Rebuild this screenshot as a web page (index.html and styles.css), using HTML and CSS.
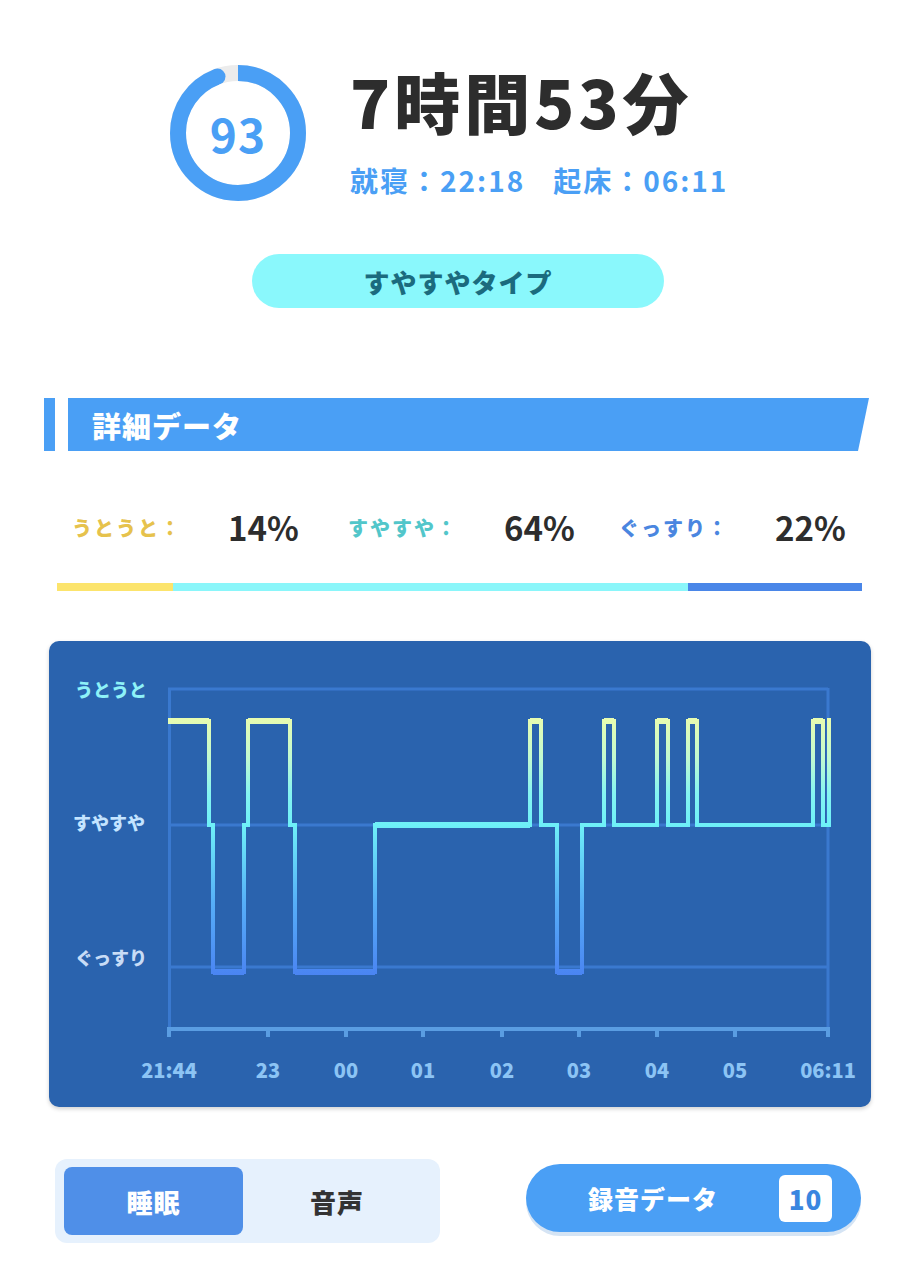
FILE: index.html
```html
<!DOCTYPE html>
<html lang="ja">
<head>
  <meta charset="UTF-8">
  <meta name="viewport" content="width=device-width, initial-scale=1.0">
  <title>睡眠データ</title>
  <link rel="stylesheet" href="styles.css">
</head>
<body>
  <div class="page">

    <!-- スコアと睡眠時間 -->
    <section class="summary">
      <div class="score">
        <svg class="score-ring" width="136" height="136" viewBox="0 0 136 136">
          <circle cx="68" cy="68" r="60" fill="none" stroke="#ececec" stroke-width="16"/>
          <circle cx="68" cy="68" r="60" fill="none" stroke="#4a9ff5" stroke-width="16"
                  stroke-dasharray="354.4 377" transform="rotate(-90 68 68)"/>
          <circle cx="47.5" cy="11.6" r="8" fill="#4a9ff5"/>
        </svg>
        <span class="score-value">93</span>
      </div>
      <div class="summary-text">
        <h1 class="duration">7時間53分</h1>
        <p class="times"><span>就寝：22:18</span><span>起床：06:11</span></p>
      </div>
    </section>

    <div class="type-pill">すやすやタイプ</div>

    <h2 class="section-title">
      <span class="title-mark"></span>
      <span class="title-bar">詳細データ</span>
    </h2>

    <div class="ratio">
      <div class="ratio-item light">
        <span class="ratio-label">うとうと：</span>
        <span class="ratio-value">14%</span>
      </div>
      <div class="ratio-item normal">
        <span class="ratio-label">すやすや：</span>
        <span class="ratio-value">64%</span>
      </div>
      <div class="ratio-item deep">
        <span class="ratio-label">ぐっすり：</span>
        <span class="ratio-value">22%</span>
      </div>
    </div>

    <div class="ratio-bar">
      <span class="bar-light" style="width:14.4%"></span>
      <span class="bar-normal" style="width:64%"></span>
      <span class="bar-deep" style="width:21.6%"></span>
    </div>

    <!-- 睡眠グラフ -->
    <div class="chart-card">
      <svg class="chart" width="822" height="466" viewBox="49 641 822 466">
        <defs>
          <linearGradient id="lineGrad" gradientUnits="userSpaceOnUse" x1="0" y1="716" x2="0" y2="976">
            <stop offset="0" stop-color="#eafcae"/>
            <stop offset="0.16" stop-color="#c2fad0"/>
            <stop offset="0.3" stop-color="#84f4f2"/>
            <stop offset="0.42" stop-color="#6ef0f8"/>
            <stop offset="0.72" stop-color="#56aef8"/>
            <stop offset="1" stop-color="#4a84f2"/>
          </linearGradient>
        </defs>

        <g class="grid">
          <line x1="168" y1="689" x2="828" y2="689"/>
          <line x1="168" y1="825" x2="828" y2="825"/>
          <line x1="168" y1="967" x2="828" y2="967"/>
          <line x1="169.5" y1="688" x2="169.5" y2="1029"/>
          <line x1="828" y1="688" x2="828" y2="1029"/>
        </g>

        <g class="axis">
          <line x1="167" y1="1029" x2="830" y2="1029"/>
          <line x1="169" y1="1029" x2="169" y2="1037"/>
          <line x1="268" y1="1029" x2="268" y2="1037"/>
          <line x1="346" y1="1029" x2="346" y2="1037"/>
          <line x1="423" y1="1029" x2="423" y2="1037"/>
          <line x1="502" y1="1029" x2="502" y2="1037"/>
          <line x1="579" y1="1029" x2="579" y2="1037"/>
          <line x1="657" y1="1029" x2="657" y2="1037"/>
          <line x1="735" y1="1029" x2="735" y2="1037"/>
          <line x1="828" y1="1029" x2="828" y2="1037"/>
        </g>

        <path class="sleep-line" d="M168 721 H209 V825 H213 V972 H244 V825 H248 V721 H290 V825 H295 V972 H375 V825 H530 V721 H541 V825 H557 V972 H582 V825 H604 V721 H614 V825 H657 V721 H668 V825 H688 V721 H697 V825 H813 V721 H823 V825 H829 V718"/>
        <path class="sleep-level" d="M168 721 H209 M248 721 H290 M530 721 H541 M604 721 H614 M657 721 H668 M688 721 H697 M813 721 H823 M213 972 H244 M295 972 H375 M557 972 H582 M375 825 H530"/>

        <text class="y-label y-light" x="75" y="697">うとうと</text>
        <text class="y-label y-normal" x="73" y="830">すやすや</text>
        <text class="y-label y-deep" x="75" y="965">ぐっすり</text>

        <g class="x-label">
          <text x="169" y="1078">21:44</text>
          <text x="268" y="1078">23</text>
          <text x="346" y="1078">00</text>
          <text x="423" y="1078">01</text>
          <text x="502" y="1078">02</text>
          <text x="579" y="1078">03</text>
          <text x="657" y="1078">04</text>
          <text x="735" y="1078">05</text>
          <text x="828" y="1078">06:11</text>
        </g>
      </svg>
    </div>

    <div class="actions">
      <div class="segment">
        <button class="seg-btn active">睡眠</button>
        <button class="seg-btn">音声</button>
      </div>
      <button class="record-btn">
        <span>録音データ</span>
        <span class="record-count">10</span>
      </button>
    </div>

  </div>
</body>
</html>
```

FILE: styles.css
```css
body {
  margin: 0;
  font-family: "Noto Sans CJK JP", "Noto Sans", sans-serif;
  background: #fff;
  color: #2d2d2d;
}
.page {
  width: 919px;
}

/* サマリー */
.summary {
  display: flex;
  gap: 44px;
  height: 136px;
  padding: 65px 0 0 170px;
}
.score {
  display: grid;
  width: 136px;
  height: 136px;
}
.score > * {
  grid-area: 1 / 1;
}
.score-value {
  place-self: center;
  font-size: 46px;
  font-weight: 700;
  color: #4a9ff5;
  letter-spacing: 1px;
}
.duration {
  margin: -1px 0 0;
  font-size: 66px;
  font-weight: 900;
  line-height: 1.1;
  letter-spacing: 4px;
  color: #2d2d2d;
}
.times {
  margin: 23px 0 0;
  font-size: 28px;
  font-weight: 700;
  color: #4a9ff5;
  letter-spacing: 2px;
}
.times span + span {
  margin-left: 28px;
}

.type-pill {
  display: flex;
  align-items: center;
  justify-content: center;
  width: 412px;
  height: 54px;
  margin: 53px 0 0 252px;
  border-radius: 27px;
  background: #8af8fc;
  color: #1b6b7e;
  font-size: 26px;
  font-weight: 900;
  letter-spacing: 1px;
}

/* 見出し */
.section-title {
  display: flex;
  gap: 13px;
  height: 53px;
  margin: 90px 0 0;
  padding-left: 44px;
}
.title-mark {
  width: 11px;
  background: #4a9ff5;
}
.title-bar {
  display: flex;
  align-items: center;
  width: 801px;
  padding-left: 24px;
  box-sizing: border-box;
  background: #4a9ff5;
  clip-path: polygon(0 0, 100% 0, calc(100% - 11px) 100%, 0 100%);
  color: #fff;
  font-size: 29px;
  font-weight: 900;
  letter-spacing: 1px;
}

/* 割合 */
.ratio {
  display: flex;
  align-items: center;
  height: 34px;
  margin: 59px 0 0 72px;
}
.ratio-item {
  display: flex;
  align-items: center;
  width: 271px;
}
.ratio-item.light {
  width: 276px;
}
.ratio-label {
  width: 156px;
  font-size: 20px;
  font-weight: 900;
  letter-spacing: 2px;
}
.light .ratio-label { color: #e6c24c; }
.normal .ratio-label { color: #52c6ca; }
.deep .ratio-label { color: #4a86e0; }
.ratio-value {
  font-size: 33px;
  font-weight: 700;
  color: #2d2d2d;
}

.ratio-bar {
  display: flex;
  width: 805px;
  height: 8px;
  margin: 39px 0 0 57px;
}
.bar-light { background: #fce46c; }
.bar-normal { background: #8af6fa; }
.bar-deep { background: #4a86e8; }

/* グラフ */
.chart-card {
  width: 822px;
  height: 466px;
  margin: 50px 0 0 49px;
  border-radius: 10px;
  background: #2a63ae;
  box-shadow: 0 2px 4px rgba(0, 0, 0, 0.18);
  overflow: hidden;
}
.chart {
  display: block;
}
.grid line {
  stroke: #3a79cf;
  stroke-width: 3;
}
.axis line {
  stroke: #5a9de2;
  stroke-width: 4;
}
.sleep-line {
  fill: none;
  stroke: url(#lineGrad);
  stroke-width: 4;
}
.sleep-level {
  fill: none;
  stroke: url(#lineGrad);
  stroke-width: 6;
}
.y-label {
  font-size: 18px;
  font-weight: 900;
}
.y-light { fill: #8ef2f8; }
.y-normal { fill: #c4e4ff; }
.y-deep { fill: #c8dcf6; }
.x-label text {
  fill: #8cc4f4;
  font-size: 20px;
  font-weight: 900;
  text-anchor: middle;
}

/* 下部ボタン */
.actions {
  display: flex;
  align-items: flex-start;
  margin-top: 52px;
  padding-left: 55px;
}
.segment {
  display: flex;
  width: 385px;
  height: 84px;
  padding: 8px 9px;
  box-sizing: border-box;
  border-radius: 12px;
  background: #e6f1fd;
}
.seg-btn {
  flex: 1;
  border: none;
  border-radius: 8px;
  background: transparent;
  color: #333;
  font-family: inherit;
  font-size: 26px;
  font-weight: 900;
  letter-spacing: 1px;
}
.seg-btn.active {
  flex: 0 0 179px;
  background: #4f8fe8;
  color: #fff;
}
.record-btn {
  display: flex;
  align-items: center;
  width: 335px;
  height: 68px;
  margin: 5px 0 0 86px;
  padding: 0 29px 0 62px;
  border: none;
  border-radius: 34px;
  background: #4a9ff5;
  box-shadow: 0 4px 0 #d5e4f4;
  color: #fff;
  font-family: inherit;
  font-size: 25px;
  font-weight: 900;
  letter-spacing: 1px;
}
.record-count {
  display: flex;
  align-items: center;
  justify-content: center;
  width: 53px;
  height: 47px;
  margin-left: auto;
  border-radius: 6px;
  background: #fff;
  color: #3a86e0;
  font-size: 26px;
  font-weight: 900;
}
```
